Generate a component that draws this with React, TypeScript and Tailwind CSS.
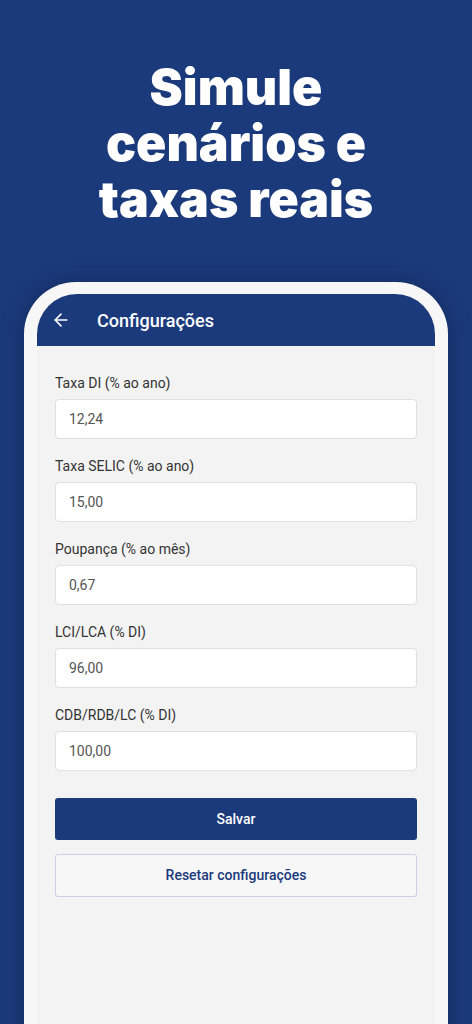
import { ArrowLeft } from 'lucide-react'

const fields = [
  { label: 'Taxa DI (% ao ano)', value: '12,24' },
  { label: 'Taxa SELIC (% ao ano)', value: '15,00' },
  { label: 'Poupança (% ao mês)', value: '0,67' },
  { label: 'LCI/LCA (% DI)', value: '96,00' },
  { label: 'CDB/RDB/LC (% DI)', value: '100,00' },
]

export default function App() {
  return (
    <div className="h-[1024px] w-full overflow-hidden bg-[#1b3a7c] font-['Roboto',sans-serif]">
      <h1 className="pt-[59px] text-center font-['Inter',sans-serif] text-[50px] font-black leading-[56px] text-white">
        Simule
        <br />
        cenários e
        <br />
        taxas reais
      </h1>

      <div className="mx-[24px] mt-[55px] h-[800px] rounded-t-[52px] bg-[#f7f7f7] px-[13px] pt-[12px] shadow-[0_0_24px_rgba(0,0,0,0.25)]">
        <div className="h-full overflow-hidden rounded-t-[40px] bg-[#f3f3f3]">
          <header className="flex h-[52px] items-center bg-[#1b3a7c] pl-[14px] text-white">
            <ArrowLeft size={20} strokeWidth={2} />
            <span className="ml-[26px] text-[18px] font-medium">Configurações</span>
          </header>

          <div className="flex flex-col px-[18px] pt-[29px]">
            {fields.map((f) => (
              <div key={f.label} className="mb-[19px]">
                <label className="block text-[14px] leading-[16px] text-[#333]">{f.label}</label>
                <div className="mt-[8px] flex h-[40px] items-center rounded-[4px] border border-[#e0e0e0] bg-white px-[13px] text-[14px] text-[#555]">
                  {f.value}
                </div>
              </div>
            ))}

            <button
              type="button"
              className="mt-[8px] flex h-[42px] w-full items-center justify-center rounded-[3px] bg-[#1b3a7c] text-[14px] font-medium text-white"
            >
              Salvar
            </button>
            <button
              type="button"
              className="mt-[14px] flex h-[43px] w-full items-center justify-center rounded-[3px] border border-[#c8cfe0] bg-[#f7f7f7] text-[14px] font-medium text-[#1b3a7c]"
            >
              Resetar configurações
            </button>
          </div>
        </div>
      </div>
    </div>
  )
}
